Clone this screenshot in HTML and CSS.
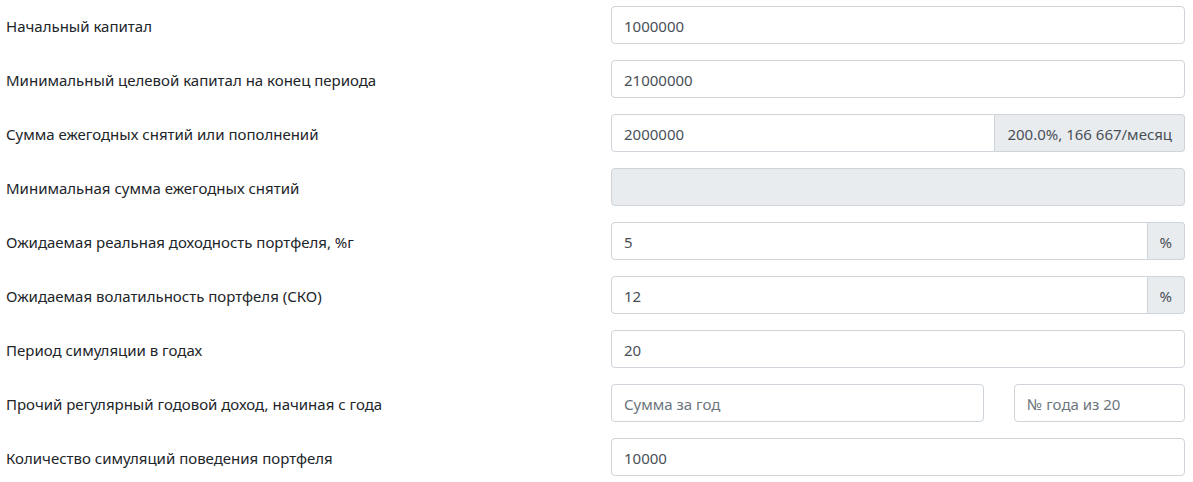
FILE: index.html
```html
<!DOCTYPE html>
<html lang="ru">
<head>
<meta charset="utf-8">
<title>Параметры симуляции</title>
<link rel="stylesheet" href="styles.css">
</head>
<body>
<form class="form">
  <div class="row">
    <label class="label">Начальный капитал</label>
    <div class="field"><input class="input" type="text" value="1000000"></div>
  </div>
  <div class="row">
    <label class="label">Минимальный целевой капитал на конец периода</label>
    <div class="field"><input class="input" type="text" value="21000000"></div>
  </div>
  <div class="row">
    <label class="label">Сумма ежегодных снятий или пополнений</label>
    <div class="field group">
      <input class="input input-left" type="text" value="2000000">
      <span class="addon">200.0%, 166 667/месяц</span>
    </div>
  </div>
  <div class="row">
    <label class="label">Минимальная сумма ежегодных снятий</label>
    <div class="field"><input class="input input-disabled" type="text" value="" disabled></div>
  </div>
  <div class="row">
    <label class="label">Ожидаемая реальная доходность портфеля, %г</label>
    <div class="field group">
      <input class="input input-left" type="text" value="5">
      <span class="addon">%</span>
    </div>
  </div>
  <div class="row">
    <label class="label">Ожидаемая волатильность портфеля (СКО)</label>
    <div class="field group">
      <input class="input input-left" type="text" value="12">
      <span class="addon">%</span>
    </div>
  </div>
  <div class="row">
    <label class="label">Период симуляции в годах</label>
    <div class="field"><input class="input" type="text" value="20"></div>
  </div>
  <div class="row">
    <label class="label">Прочий регулярный годовой доход, начиная с года</label>
    <div class="field split">
      <input class="input" type="text" placeholder="Сумма за год">
      <input class="input" type="text" placeholder="№ года из 20">
    </div>
  </div>
  <div class="row">
    <label class="label">Количество симуляций поведения портфеля</label>
    <div class="field"><input class="input" type="text" value="10000"></div>
  </div>
</form>
</body>
</html>
```

FILE: styles.css
```css
* { box-sizing: border-box; }
html, body { margin: 0; padding: 0; background: #fff; }
body {
  font-family: "Noto Sans", "Open Sans", "Liberation Sans", sans-serif;
  font-size: 15px;
  color: #212529;
}
.form {
  padding: 6px 8px 0 6px;
  display: flex;
  flex-direction: column;
  gap: 16px;
}
.row {
  display: grid;
  grid-template-columns: 1fr 574px;
  grid-template-rows: 38px;
  align-items: start;
  height: 38px;
}
.label {
  font-size: 15px;
  height: 38px;
  line-height: 36px;
  padding-top: 2px;
  color: #212529;
  white-space: nowrap;
}
.field { display: flex; height: 38px; }
.input {
  flex: 1 1 auto;
  min-width: 0;
  height: 38px;
  padding: 1px 12px 0;
  border: 1px solid #ced4da;
  border-radius: 4px;
  font-family: inherit;
  font-size: 15px;
  color: #495057;
  background: #fff;
  outline: none;
}
.input::placeholder { color: #6c757d; opacity: 1; }
.input-disabled { background: #e9ecef; }
.input-left { border-top-right-radius: 0; border-bottom-right-radius: 0; }
.addon {
  display: flex;
  align-items: center;
  padding: 1px 12px 0;
  border: 1px solid #ced4da;
  border-left: 0;
  border-radius: 0 4px 4px 0;
  background: #e9ecef;
  color: #495057;
  font-size: 15px;
  white-space: nowrap;
}
.split { gap: 30px; }
.split .input:first-child { flex: 0 0 373px; }
.split .input:last-child { flex: 1 1 auto; }
```
